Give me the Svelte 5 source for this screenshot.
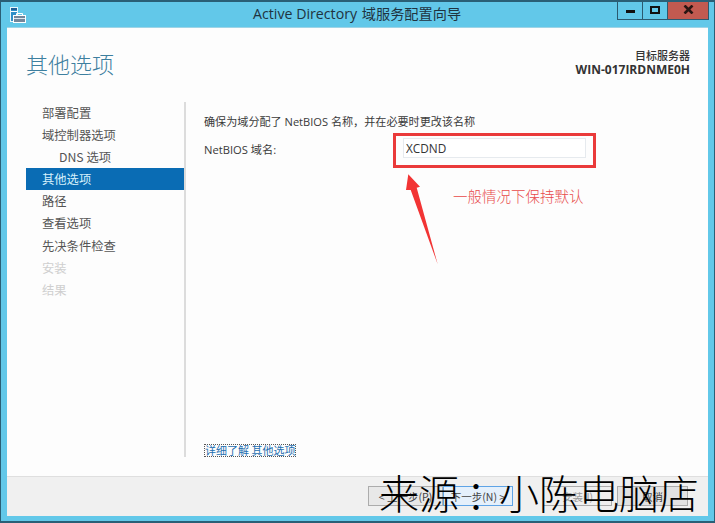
<script>
  const steps = [
    { label: '部署配置' },
    { label: '域控制器选项' },
    { label: 'DNS 选项', sub: true },
    { label: '其他选项', active: true },
    { label: '路径' },
    { label: '查看选项' },
    { label: '先决条件检查' },
    { label: '安装', off: true },
    { label: '结果', off: true }
  ];
</script>

<div class="window">
  <header class="titlebar">
    <svg class="appicon" width="18" height="18" viewBox="0 0 18 18">
      <rect x="1.500" y="1.500" width="7" height="14" fill="#2f8fc8" stroke="#e8f6fb" stroke-width="1"/>
      <rect x="2" y="2" width="6" height="2" fill="#1f5f96"/>
      <rect x="2" y="5" width="6" height="1" fill="#fff"/>
      <path d="M7.500 10V7.500h6V10" fill="none" stroke="#fff" stroke-width="1"/>
      <rect x="4.500" y="9.500" width="12" height="7" fill="#74879b" stroke="#fff" stroke-width="1"/>
      <rect x="5" y="12" width="11" height="1" fill="#dfe6ee"/>
    </svg>
    <span class="title">Active Directory <span class="cjk">域服务配置向导</span></span>
    <div class="controls">
      <div class="ctl min"><i></i></div>
      <div class="ctl max"><i></i></div>
      <div class="ctl close">
        <svg width="11" height="9" viewBox="0 0 11 9"><path d="M1.500 .5l8 8M9.500 .5l-8 8" stroke="#2a1512" stroke-width="2.600" fill="none"/></svg>
      </div>
    </div>
  </header>

  <div class="client">
    <div class="head">
      <h1>其他选项</h1>
      <div class="target">
        <div class="target-label">目标服务器</div>
        <div>WIN-017IRDNME0H</div>
      </div>
    </div>

    <div class="body">
      <nav class="steps">
        {#each steps as s}
          <div class="step" class:sub={s.sub} class:active={s.active} class:off={s.off}>{s.label}</div>
        {/each}
      </nav>
      <main class="pane">
        <p class="intro">确保为域分配了 NetBIOS 名称，并在必要时更改该名称</p>
        <div class="field">
          <label for="nb">NetBIOS 域名:</label>
          <div class="redbox">
            <input id="nb" value="XCDND" />
          </div>
        </div>
        <div class="note-row">
          <svg class="arrow" width="36" height="92" viewBox="0 0 36 92">
            <path d="M4.300 1.300L16 13.700l-3.300 1L33.700 91.300 6.700 17 2 17z" fill="#f23434"/>
          </svg>
          <span class="note">一般情况下保持默认</span>
        </div>
        <div class="more"><span>详细了解 其他选项</span></div>
      </main>
    </div>

    <footer class="foot">
      <button class="btn">&lt; 上一步(P)</button>
      <button class="btn primary">下一步(N) &gt;</button>
      <button class="btn dim">安装(I)</button>
      <button class="btn cancel">取消</button>
    </footer>
  </div>

  <div class="mark">来源<span class="colon">：</span>小陈电脑店</div>
</div>

<style>
  :global(body) {
    margin: 0;
  }
  .window {
    position: relative;
    width: 715px;
    height: 523px;
    box-sizing: border-box;
    background: #62c8e9;
    border: 1px solid #2a5f76;
    border-top-width: 2px;
    border-bottom-width: 2px;
    display: flex;
    flex-direction: column;
    overflow: hidden;
    font-family: "Noto Sans CJK SC", "Noto Sans", sans-serif;
    color: #444;
  }
  .titlebar {
    height: 26px;
    flex: none;
    display: flex;
    align-items: center;
    position: relative;
    padding-left: 8px;
  }
  .appicon {
    margin-top: -1px;
  }
  .title {
    position: absolute;
    left: 252px;
    top: 2px;
    font-size: 14.200px;
    line-height: 20px;
    color: #1f3340;
    font-family: "Open Sans", "Noto Sans CJK SC", sans-serif;
  }
  .cjk {
    font-size: 14.200px;
    margin-left: 1px;
  }
  .controls {
    margin-left: auto;
    margin-right: 5px;
    height: 20px;
    display: flex;
    align-self: flex-start;
    margin-top: -2px;
  }
  .ctl {
    height: 20px;
    box-sizing: border-box;
    border: 1px solid #2b5a70;
    border-top: none;
    display: flex;
    align-items: center;
    justify-content: center;
  }
  .min {
    width: 25px;
    border-right: none;
  }
  .min i {
    display: block;
    width: 9px;
    height: 3px;
    background: #111;
    margin-top: 4px;
  }
  .max {
    width: 25px;
    border-right: none;
  }
  .max i {
    display: block;
    width: 6px;
    height: 4px;
    border: 2px solid #111;
  }
  .close {
    width: 42px;
    background: #c25a50;
  }
  .client {
    flex: 1;
    margin: 0 6px 5px 6px;
    background: #fdfdfd;
    display: flex;
    flex-direction: column;
    min-height: 0;
    box-shadow: 0 -1px 0 #9fd4e6;
  }
  .head {
    height: 74px;
    flex: none;
    display: flex;
    justify-content: space-between;
    padding: 0 18px 0 19px;
  }
  h1 {
    margin: 18px 0 0;
    font-size: 22px;
    line-height: 34px;
    font-weight: 300;
    color: #3d7f9f;
  }
  .target {
    margin-top: 21px;
    text-align: right;
    font-size: 12px;
    line-height: 14px;
    font-weight: 700;
    color: #333;
    font-family: "Open Sans", "Noto Sans CJK SC", sans-serif;
  }
  .target-label {
    font-size: 11px;
    font-weight: 500;
  }
  .body {
    flex: 1;
    display: flex;
    min-height: 0;
  }
  .steps {
    width: 158px;
    margin-left: 19px;
    flex: none;
    height: 355px;
    border-right: 2px solid #dcdcdc;
  }
  .step {
    height: 22.100px;
    line-height: 22px;
    padding-left: 16px;
    font-size: 12.300px;
    color: #555;
    font-family: "Noto Sans CJK SC", sans-serif;
  }
  .step.sub {
    padding-left: 33px;
  }
  .step.active {
    background: #0a6cb4;
    color: #d6f0fb;
  }
  .step.off {
    color: #cfcfcf;
  }
  .pane {
    flex: 1;
    position: relative;
    padding: 12px 0 0 18px;
    display: flex;
    flex-direction: column;
    min-width: 0;
    height: 343px;
  }
  .intro {
    margin: 0;
    font-size: 11.100px;
    line-height: 16px;
    color: #3a3a3a;
    font-family: "Open Sans", "Noto Sans CJK SC", sans-serif;
  }
  .field {
    display: flex;
    align-items: center;
    margin-top: 3px;
    height: 35px;
  }
  label {
    width: 189px;
    flex: none;
    padding-bottom: 4px;
    font-size: 11.200px;
    color: #3a3a3a;
    font-family: "Open Sans", "Noto Sans CJK SC", sans-serif;
  }
  .redbox {
    width: 203px;
    height: 35px;
    box-sizing: border-box;
    border: 3px solid #ea3a3a;
    display: flex;
    align-items: flex-start;
    padding: 2px 0 0 7px;
  }
  input {
    width: 183px;
    height: 20px;
    box-sizing: border-box;
    border: 1px solid #e6eaee;
    background: #fff;
    padding: 0 0 0 2px;
    font-size: 11.800px;
    color: #333;
    font-family: "Open Sans", sans-serif;
    outline: none;
  }
  .note-row {
    position: relative;
    height: 92px;
    margin-top: 5px;
    margin-left: 200px;
  }
  .arrow {
    display: block;
  }
  .note {
    position: absolute;
    left: 49px;
    top: 13px;
    font-size: 14.500px;
    line-height: 20px;
    font-weight: 300;
    color: #e84a4a;
    white-space: nowrap;
  }
  .more {
    margin-top: auto;
    font-size: 11px;
    line-height: 11px;
  }
  .more span {
    display: inline-block;
    border: 1px dotted #555;
    color: #1f6fb0;
    line-height: 11px;
  }
  .foot {
    height: 40px;
    flex: none;
    background: #f0f0f0;
    border-top: 1px solid #dfdfdf;
    box-sizing: border-box;
    display: flex;
    align-items: flex-start;
    padding: 9px 0 0 361px;
  }
  .btn {
    width: 75px;
    height: 20px;
    box-sizing: border-box;
    margin: 0;
    padding: 0;
    border: 1px solid #acacac;
    background: #e8e8e8;
    font-size: 10.500px;
    line-height: 17px;
    color: #444;
    font-family: "Noto Sans CJK SC", sans-serif;
  }
  .btn.primary {
    border: 1px solid #5fa4e6;
    background: #e5f0fb;
    width: 70px;
  }
  .btn.dim {
    color: #999;
    margin-left: 30px;
    width: 69px;
    background: #efefef;
  }
  .btn.cancel {
    margin-left: 5px;
    width: 71px;
    background: #e2e2e2;
  }
  .mark {
    position: absolute;
    left: 378px;
    top: 465px;
    font-size: 40px;
    line-height: 50px;
    font-weight: 300;
    color: #000;
    white-space: nowrap;
    font-family: "Noto Sans CJK SC", sans-serif;
  }
  .colon {
    display: inline-block;
    padding-left: 7px;
    margin-right: -7px;
  }
</style>
